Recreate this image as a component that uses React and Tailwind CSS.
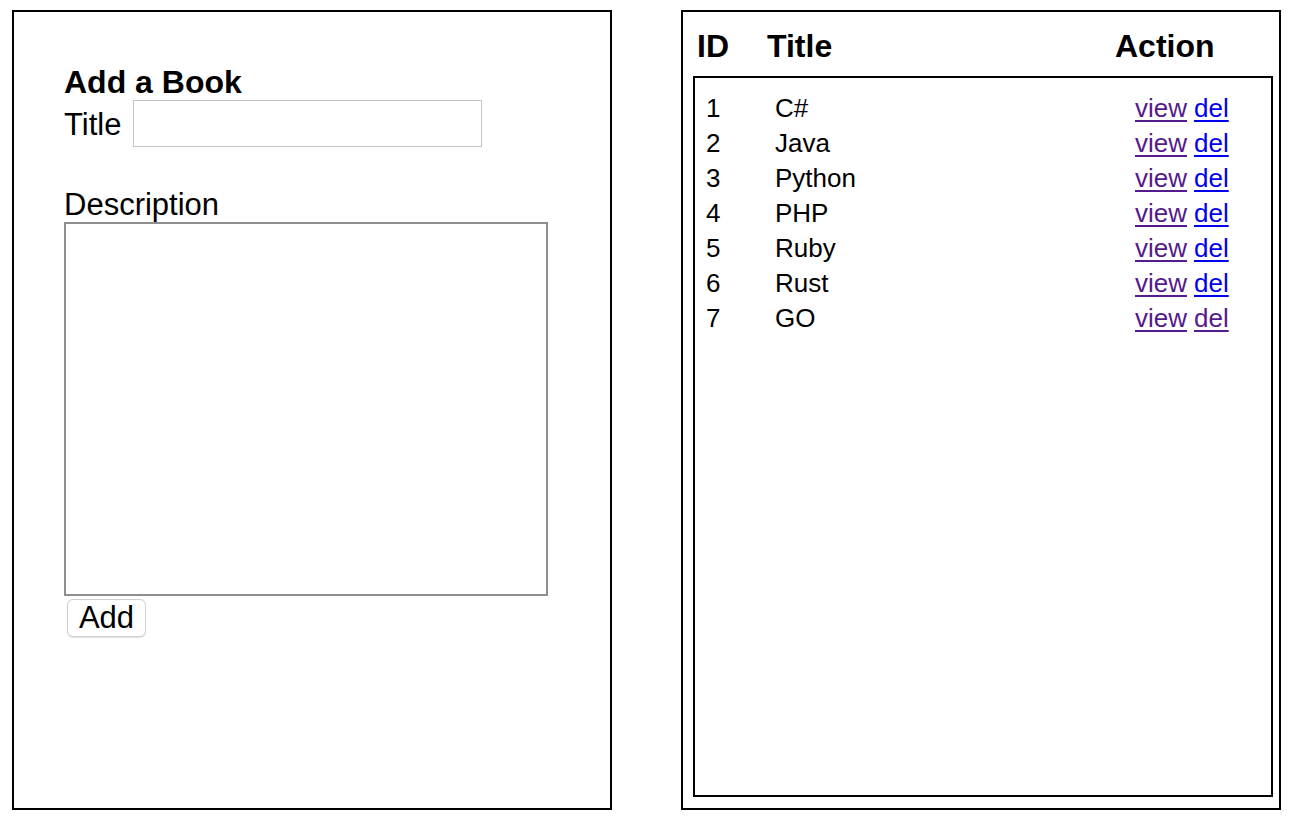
import React, { useState } from 'react';

const BOOKS = [
  { id: 1, title: 'C#' },
  { id: 2, title: 'Java' },
  { id: 3, title: 'Python' },
  { id: 4, title: 'PHP' },
  { id: 5, title: 'Ruby' },
  { id: 6, title: 'Rust' },
  { id: 7, title: 'GO' },
];

function AddBookForm() {
  const [title, setTitle] = useState('');
  const [description, setDescription] = useState('');

  return (
    <div className="w-[600px] h-[800px] border-2 border-black pt-[52px] pl-[50px]">
      <h3 className="text-[32px] leading-[36px] font-bold">Add a Book</h3>
      <div className="flex items-center h-[47px]">
        <label className="text-[31px] leading-[36px] mt-[2px]">Title</label>
        <input
          value={title}
          onChange={(e) => setTitle(e.target.value)}
          className="ml-[12px] w-[349px] h-[47px] border border-[#c4c4c4] outline-none px-1 text-[26px]"
        />
      </div>
      <label className="block mt-[40px] text-[31px] leading-[36px] -mb-[1px]">Description</label>
      <textarea
        value={description}
        onChange={(e) => setDescription(e.target.value)}
        className="block w-[484px] h-[374px] border-2 border-[#8f8f8f] outline-none resize-none p-1 text-[26px]"
      />
      <button className="block mt-[3px] ml-[3px] w-[79px] h-[38px] bg-white border border-[#d0d0d0] rounded-[6px] shadow-[0_1px_1px_rgba(0,0,0,0.12)] text-[31px] leading-[34px]">
        Add
      </button>
    </div>
  );
}

function BookList() {
  return (
    <div className="w-[600px] h-[800px] border-2 border-black pt-[16px] pl-[10px] pr-[6px]">
      <div className="flex text-[32px] leading-[36px] font-bold pl-[4px]">
        <div className="w-[70px]">ID</div>
        <div className="w-[348px]">Title</div>
        <div>Action</div>
      </div>
      <div className="mt-[12px] h-[721px] border-2 border-black pt-[13px] pl-[11px] text-[26px] leading-[35px]">
        {BOOKS.map((book) => (
          <div key={book.id} className="flex">
            <div className="w-[69px]">{book.id}</div>
            <div className="w-[360px]">{book.title}</div>
            <div className="flex gap-[7px]">
              <a href="#" className="text-[#551a8b] underline decoration-2 underline-offset-[3px]">view</a>
              <a
                href="#"
                className={`${book.id === 7 ? 'text-[#551a8b]' : 'text-[#0000ee]'} underline decoration-2 underline-offset-[3px]`}
              >
                del
              </a>
            </div>
          </div>
        ))}
      </div>
    </div>
  );
}

export default function App() {
  return (
    <div className="flex gap-[69px] pt-[10px] pl-[12px] bg-white min-h-[826px] text-black font-['Liberation_Sans',Arial,sans-serif]">
      <AddBookForm />
      <BookList />
    </div>
  );
}
